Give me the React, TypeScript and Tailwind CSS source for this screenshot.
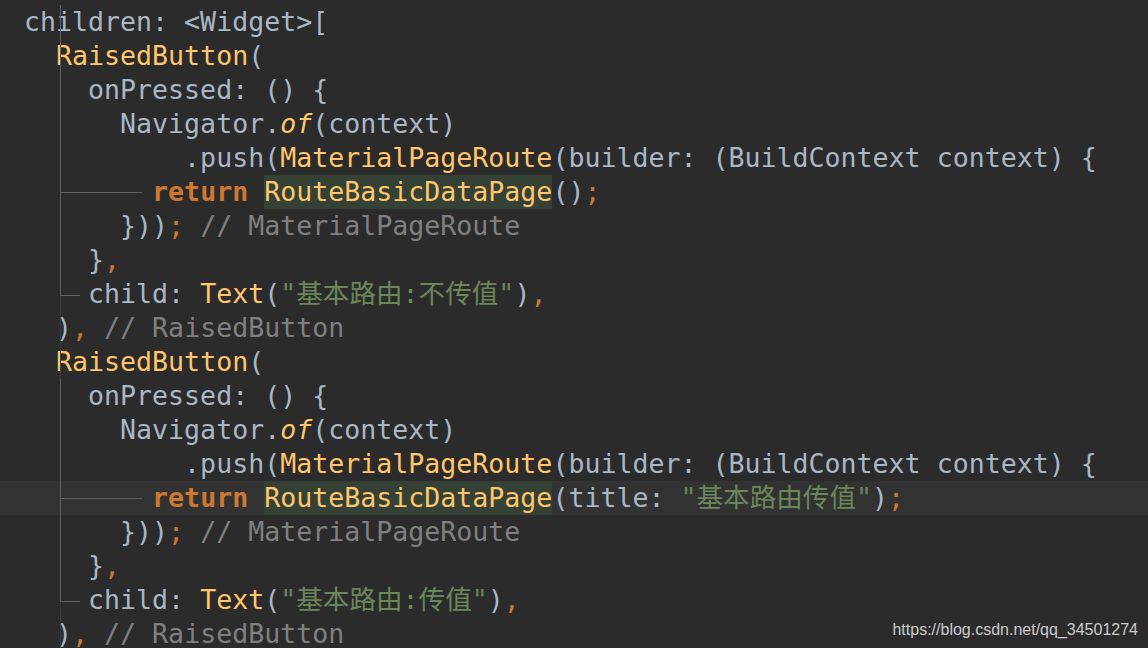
import React from "react";

type Tok = [string, string];

const D = "text-[#a9b7c6]";
const Y = "text-[#ffc66d]";
const K = "text-[#cc7832] font-bold";
const O = "text-[#cc7832]";
const S = "text-[#6a8759]";
const C = "text-[#808080]";
const I = "text-[#ffc66d] italic";
const HL = "text-[#ffc66d] bg-[#344134] inline-block h-[34px]";

const lines: { toks: Tok[]; current?: boolean }[] = [
  { toks: [["children: <Widget>[", D]] },
  { toks: [["  ", D], ["RaisedButton", Y], ["(", D]] },
  { toks: [["    onPressed: () {", D]] },
  { toks: [["      Navigator.", D], ["of", I], ["(context)", D]] },
  {
    toks: [
      ["          .push(", D],
      ["MaterialPageRoute", Y],
      ["(builder: (BuildContext context) {", D],
    ],
  },
  {
    toks: [
      ["        ", D],
      ["return", K],
      [" ", D],
      ["RouteBasicDataPage", HL],
      ["()", D],
      [";", O],
    ],
  },
  { toks: [["      }))", D], [";", O], [" // MaterialPageRoute", C]] },
  { toks: [["    }", D], [",", O]] },
  {
    toks: [
      ["    child: ", D],
      ["Text", Y],
      ["(", D],
      ["\"基本路由:不传值\"", S],
      [")", D],
      [",", O],
    ],
  },
  { toks: [["  )", D], [",", O], [" // RaisedButton", C]] },
  { toks: [["  ", D], ["RaisedButton", Y], ["(", D]] },
  { toks: [["    onPressed: () {", D]] },
  { toks: [["      Navigator.", D], ["of", I], ["(context)", D]] },
  {
    toks: [
      ["          .push(", D],
      ["MaterialPageRoute", Y],
      ["(builder: (BuildContext context) {", D],
    ],
  },
  {
    current: true,
    toks: [
      ["        ", D],
      ["return", K],
      [" ", D],
      ["RouteBasicDataPage", HL],
      ["(title: ", D],
      ["\"基本路由传值\"", S],
      [")", D],
      [";", O],
    ],
  },
  { toks: [["      }))", D], [";", O], [" // MaterialPageRoute", C]] },
  { toks: [["    }", D], [",", O]] },
  {
    toks: [
      ["    child: ", D],
      ["Text", Y],
      ["(", D],
      ["\"基本路由:传值\"", S],
      [")", D],
      [",", O],
    ],
  },
  { toks: [["  )", D], [",", O], [" // RaisedButton", C]] },
];

export default function App() {
  return (
    <div className="relative w-[1148px] h-[648px] overflow-hidden bg-[#2b2b2b]">
      {/* code lines */}
      <div
        className="flex flex-col pt-[5px] text-[26.6px] whitespace-pre"
        style={{ fontFamily: '"DejaVu Sans Mono", "Noto Sans CJK SC", monospace' }}
      >
        {lines.map((l, i) => (
          <div
            key={i}
            className={
              "h-[34px] shrink-0 leading-[34px] pl-[24px] " +
              (l.current ? "bg-[#323232]" : "")
            }
          >
            {l.toks.map(([t, c], j) => (
              <span key={j} className={c}>
                {t}
              </span>
            ))}
          </div>
        ))}
      </div>

      {/* indent guides drawn over the code */}
      <div className="absolute left-[60px] top-[5px] w-px h-[643px] bg-[#3c3c3c]" />
      <div className="absolute left-[60px] top-[5px] w-px h-[291px] bg-[#616161]" />
      <div className="absolute left-[60px] top-[192px] w-[82px] h-px bg-[#616161]" />
      <div className="absolute left-[60px] top-[295px] w-[20px] h-px bg-[#616161]" />
      <div className="absolute left-[60px] top-[379px] w-px h-[223px] bg-[#616161]" />
      <div className="absolute left-[60px] top-[498px] w-[82px] h-px bg-[#616161]" />
      <div className="absolute left-[60px] top-[601px] w-[20px] h-px bg-[#616161]" />

      {/* watermark */}
      <div
        className="absolute right-[10px] bottom-[10px] text-[16px] leading-[16px] text-[#cccccc]"
        style={{ fontFamily: '"Liberation Sans", Arial, sans-serif' }}
      >
        https://blog.csdn.net/qq_34501274
      </div>
    </div>
  );
}
